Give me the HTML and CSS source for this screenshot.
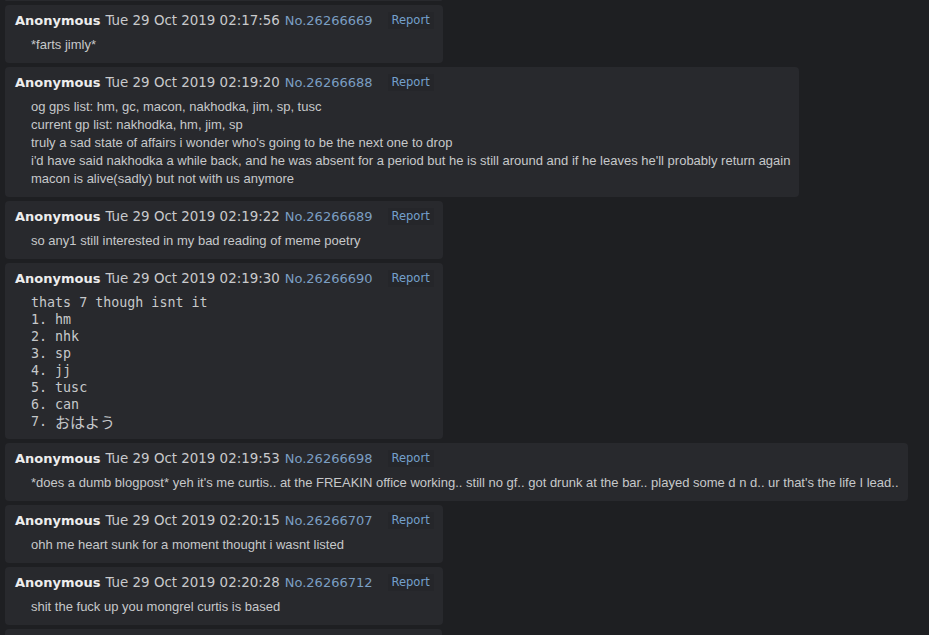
FILE: index.html
```html
<!DOCTYPE html>
<html lang="en">
<head>
<meta charset="utf-8">
<title>Thread</title>
<link rel="stylesheet" href="styles.css">
</head>
<body>
<div class="thread">
  <div class="stub stub-top"></div>

  <article class="post">
    <header class="post-head">
      <span class="name">Anonymous</span>
      <span class="date">Tue 29 Oct 2019 02:17:56</span>
      <a class="num">No.26266669</a>
      <span class="report">Report</span>
    </header>
    <div class="body">*farts jimly*</div>
  </article>

  <article class="post">
    <header class="post-head">
      <span class="name">Anonymous</span>
      <span class="date">Tue 29 Oct 2019 02:19:20</span>
      <a class="num">No.26266688</a>
      <span class="report">Report</span>
    </header>
    <div class="body">og gps list: hm, gc, macon, nakhodka, jim, sp, tusc<br>current gp list: nakhodka, hm, jim, sp<br>truly a sad state of affairs i wonder who's going to be the next one to drop<br>i'd have said nakhodka a while back, and he was absent for a period but he is still around and if he leaves he'll probably return again<br>macon is alive(sadly) but not with us anymore</div>
  </article>

  <article class="post">
    <header class="post-head">
      <span class="name">Anonymous</span>
      <span class="date">Tue 29 Oct 2019 02:19:22</span>
      <a class="num">No.26266689</a>
      <span class="report">Report</span>
    </header>
    <div class="body">so any1 still interested in my bad reading of meme poetry</div>
  </article>

  <article class="post">
    <header class="post-head">
      <span class="name">Anonymous</span>
      <span class="date">Tue 29 Oct 2019 02:19:30</span>
      <a class="num">No.26266690</a>
      <span class="report">Report</span>
    </header>
    <div class="body mono">thats 7 though isnt it<br>1. hm<br>2. nhk<br>3. sp<br>4. jj<br>5. tusc<br>6. can<br>7. <span class="jp">おはよう</span></div>
  </article>

  <article class="post">
    <header class="post-head">
      <span class="name">Anonymous</span>
      <span class="date">Tue 29 Oct 2019 02:19:53</span>
      <a class="num">No.26266698</a>
      <span class="report">Report</span>
    </header>
    <div class="body">*does a dumb blogpost* yeh it's me curtis.. at the FREAKIN office working.. still no gf.. got drunk at the bar.. played some d n d.. ur that's the life I lead..</div>
  </article>

  <article class="post">
    <header class="post-head">
      <span class="name">Anonymous</span>
      <span class="date">Tue 29 Oct 2019 02:20:15</span>
      <a class="num">No.26266707</a>
      <span class="report">Report</span>
    </header>
    <div class="body">ohh me heart sunk for a moment thought i wasnt listed</div>
  </article>

  <article class="post">
    <header class="post-head">
      <span class="name">Anonymous</span>
      <span class="date">Tue 29 Oct 2019 02:20:28</span>
      <a class="num">No.26266712</a>
      <span class="report">Report</span>
    </header>
    <div class="body">shit the fuck up you mongrel curtis is based</div>
  </article>

  <div class="stub stub-bottom"></div>
</div>
</body>
</html>
```
FILE: styles.css
```css
html, body {
  margin: 0;
  padding: 0;
  background: #1e1f22;
  height: 100%;
  overflow: hidden;
}

.thread {
  display: flex;
  flex-direction: column;
  align-items: flex-start;
  gap: 4px;
  padding: 0 5px;
}

.stub {
  width: 437px;
  background: #28292d;
}

.stub-top {
  height: 1px;
  border-radius: 0 0 4px 4px;
}

.stub-bottom {
  height: 20px;
  border-radius: 4px 4px 0 0;
}

.post {
  background: #28292d;
  border-radius: 4px;
  padding: 5px 9px 9px 10px;
}

.post-head {
  display: flex;
  align-items: center;
  gap: 5px;
  height: 20px;
  font-family: "DejaVu Sans", Verdana, sans-serif;
  font-size: 13px;
  white-space: nowrap;
}

.name {
  font-weight: bold;
  color: #ededed;
}

.date {
  color: #c9cacc;
  font-size: 13.4px;
}

.num {
  color: #7b9ec2;
  text-decoration: none;
}

.report {
  margin-left: 10px;
  padding: 0 4px;
  height: 17px;
  line-height: 17px;
  font-size: 11.5px;
  color: #74a0cc;
  background: #25262a;
}

.body {
  margin: 5px 0 0 16px;
  padding-top: 1px;
  font-family: "Liberation Sans", Arial, sans-serif;
  font-size: 13px;
  line-height: 18px;
  color: #c6c8ca;
  white-space: nowrap;
}

.body.mono {
  font-family: "DejaVu Sans Mono", "Liberation Mono", "Noto Sans CJK JP", monospace;
  font-size: 13.33px;
  line-height: 17px;
}

.jp {
  font-family: "Noto Sans CJK JP", sans-serif;
  font-size: 15px;
  line-height: 17px;
  vertical-align: top;
}
```
